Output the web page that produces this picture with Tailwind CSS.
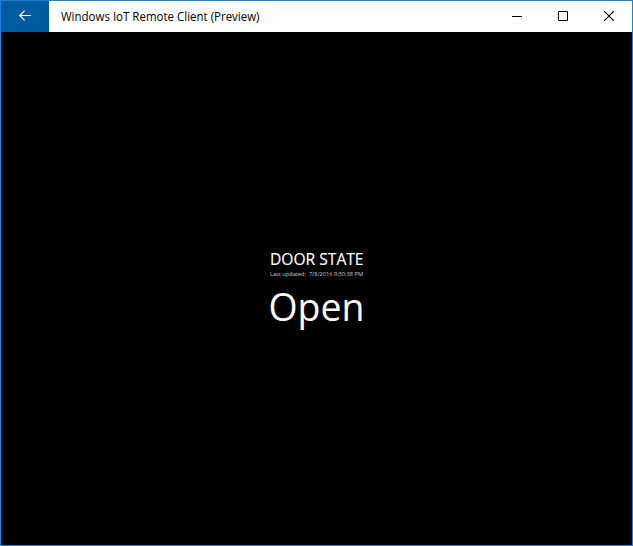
<!DOCTYPE html>
<html lang="en"><head><meta charset="utf-8"><title>Windows IoT Remote Client (Preview)</title>
<script src="https://cdn.jsdelivr.net/npm/@tailwindcss/browser@4"></script></head>
<body class="h-[546px] w-[633px] overflow-hidden">
<main class="flex h-full w-full flex-col border border-[#1883d7] bg-black font-['Open_Sans',sans-serif]">
<header class="flex h-[31px] shrink-0 items-stretch bg-white text-black">
<button aria-label="Back" class="flex w-12 items-center justify-center bg-[#005a9e] pb-px text-white"><svg width="12" height="10" viewBox="0 0 12 10" class="overflow-visible" fill="none" stroke="currentColor" stroke-width="1.2"><path d="M12 4.5H.8M5.6 -.4L.7 4.5l4.9 4.9"/></svg></button>
<h1 class="ml-3 flex items-center pb-px text-[12px] whitespace-nowrap"><svg width="210" height="20" class="overflow-visible"><text x="0" y="15" textLength="198.5" lengthAdjust="spacingAndGlyphs">Windows IoT Remote Client (Preview)</text></svg></h1>
<div class="ml-auto flex pb-px">
<button aria-label="Minimize" class="flex w-[46px] items-center justify-center"><svg width="10" height="10" stroke="currentColor"><path d="M0 5.5h10"/></svg></button>
<button aria-label="Maximize" class="flex w-[46px] items-center justify-center"><svg width="10" height="10" fill="none" stroke="currentColor"><path d="M.5 .5h9v9h-9z"/></svg></button>
<button aria-label="Close" class="flex w-[46px] items-center justify-center"><svg width="10" height="10" stroke="currentColor" stroke-width="1.15"><path d="M0 0l10 10M10 0L0 10"/></svg></button>
</div></header>
<section class="flex flex-1 flex-col items-center pt-[218px] text-white">
<svg width="94" height="20" class="overflow-visible text-[17px]" fill="currentColor" stroke="currentColor" stroke-width=".15"><text x="0" y="15" textLength="93.5" lengthAdjust="spacingAndGlyphs">DOOR STATE</text></svg>
<svg width="94" height="8" class="overflow-visible text-[6px]" fill="#cfcfcf"><text x="0" y="6" textLength="93" lengthAdjust="spacingAndGlyphs" xml:space="preserve">Last updated:  7/8/2016 9:30:38 PM</text></svg>
<svg width="94" height="52" class="overflow-visible text-[39px]" fill="currentColor"><text x="-1.5" y="43" textLength="96" lengthAdjust="spacingAndGlyphs">Open</text></svg>
</section></main></body></html>
